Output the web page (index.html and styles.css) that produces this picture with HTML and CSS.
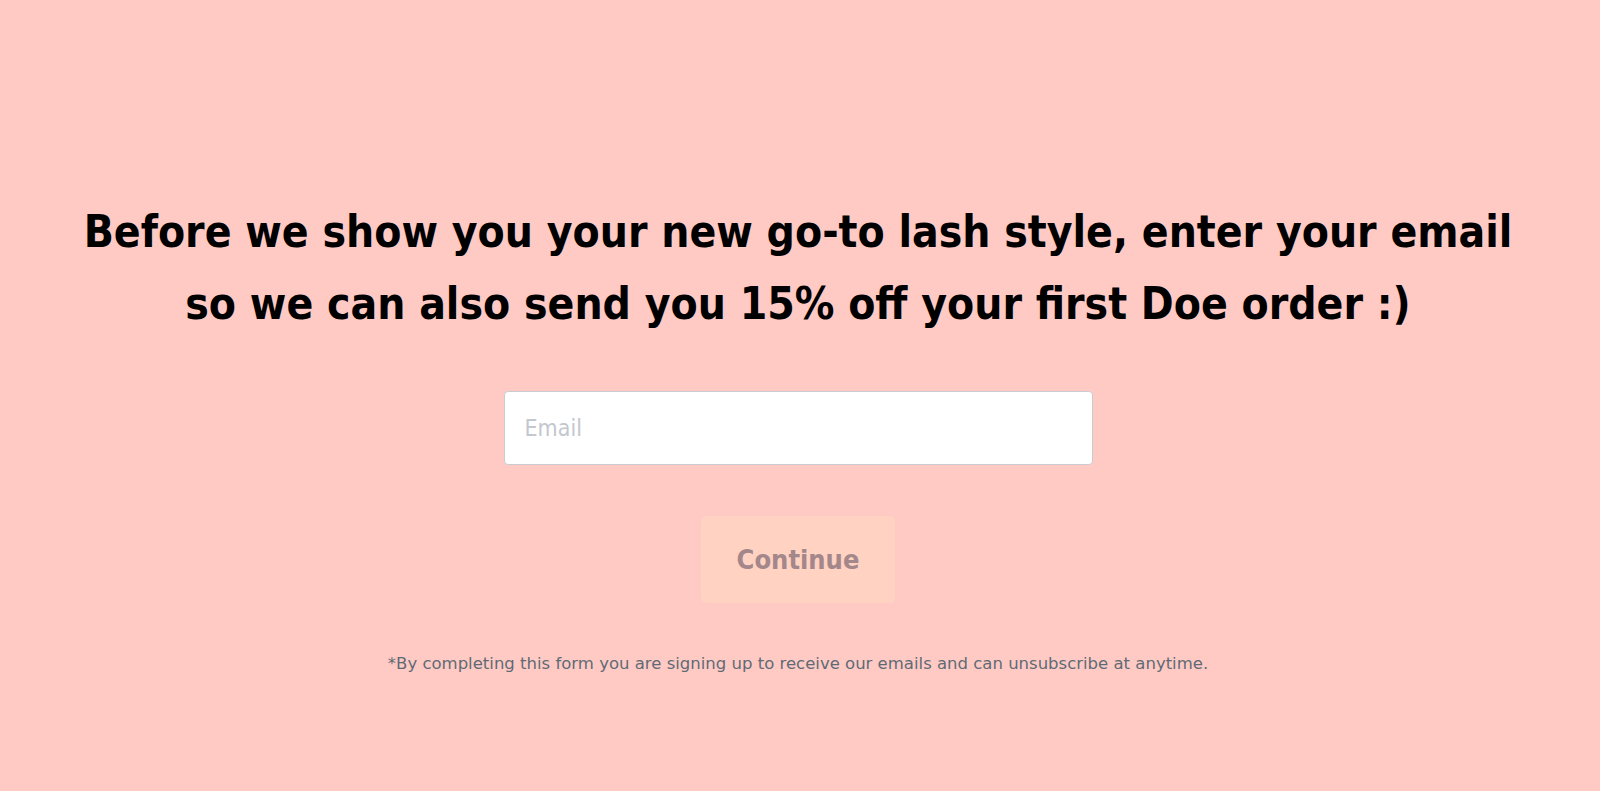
FILE: index.html
```html
<!DOCTYPE html>
<html lang="en">
<head>
<meta charset="utf-8">
<title>Email</title>
<link rel="stylesheet" href="styles.css">
</head>
<body>
<main class="page">
  <h1 class="title">Before we show you your new go-to lash style, enter your email<br>so we can also send you 15% off your first Doe order :)</h1>
  <form class="form">
    <input class="email" type="email" placeholder="Email">
    <button class="continue" type="button">Continue</button>
  </form>
  <p class="note">*By completing this form you are signing up to receive our emails and can unsubscribe at anytime.</p>
</main>
</body>
</html>
```

FILE: styles.css
```css
html, body {
  margin: 0;
  padding: 0;
  height: 100%;
}
body {
  background: #ffcac4;
  font-family: "DejaVu Sans Condensed", "DejaVu Sans", sans-serif;
  font-stretch: condensed;
}
.page {
  display: flex;
  flex-direction: column;
  align-items: center;
  padding-top: 196px;
  padding-right: 4px;
}
.title {
  margin: 0;
  font-size: 44px;
  line-height: 72px;
  font-weight: bold;
  color: #000;
  text-align: center;
}
.form {
  display: flex;
  flex-direction: column;
  align-items: center;
  margin-top: 51px;
}
.email {
  box-sizing: border-box;
  width: 589px;
  height: 74px;
  padding: 0 20px;
  background: #fff;
  border: 1px solid #c9cdd3;
  border-radius: 4px;
  font-family: inherit;
  font-stretch: condensed;
  font-size: 23px;
  color: #333;
  outline: none;
}
.email::placeholder {
  color: #c3c7ce;
}
.continue {
  margin-top: 51px;
  width: 194px;
  height: 87px;
  border: none;
  border-radius: 5px;
  background: #ffd2c2;
  color: #a3878a;
  font-family: inherit;
  font-stretch: condensed;
  font-weight: bold;
  font-size: 27px;
  cursor: pointer;
}
.note {
  margin: 49px 0 0;
  font-family: "DejaVu Sans", sans-serif;
  font-stretch: normal;
  font-size: 16.5px;
  line-height: 24px;
  color: #5f6a75;
  text-align: center;
}
```
